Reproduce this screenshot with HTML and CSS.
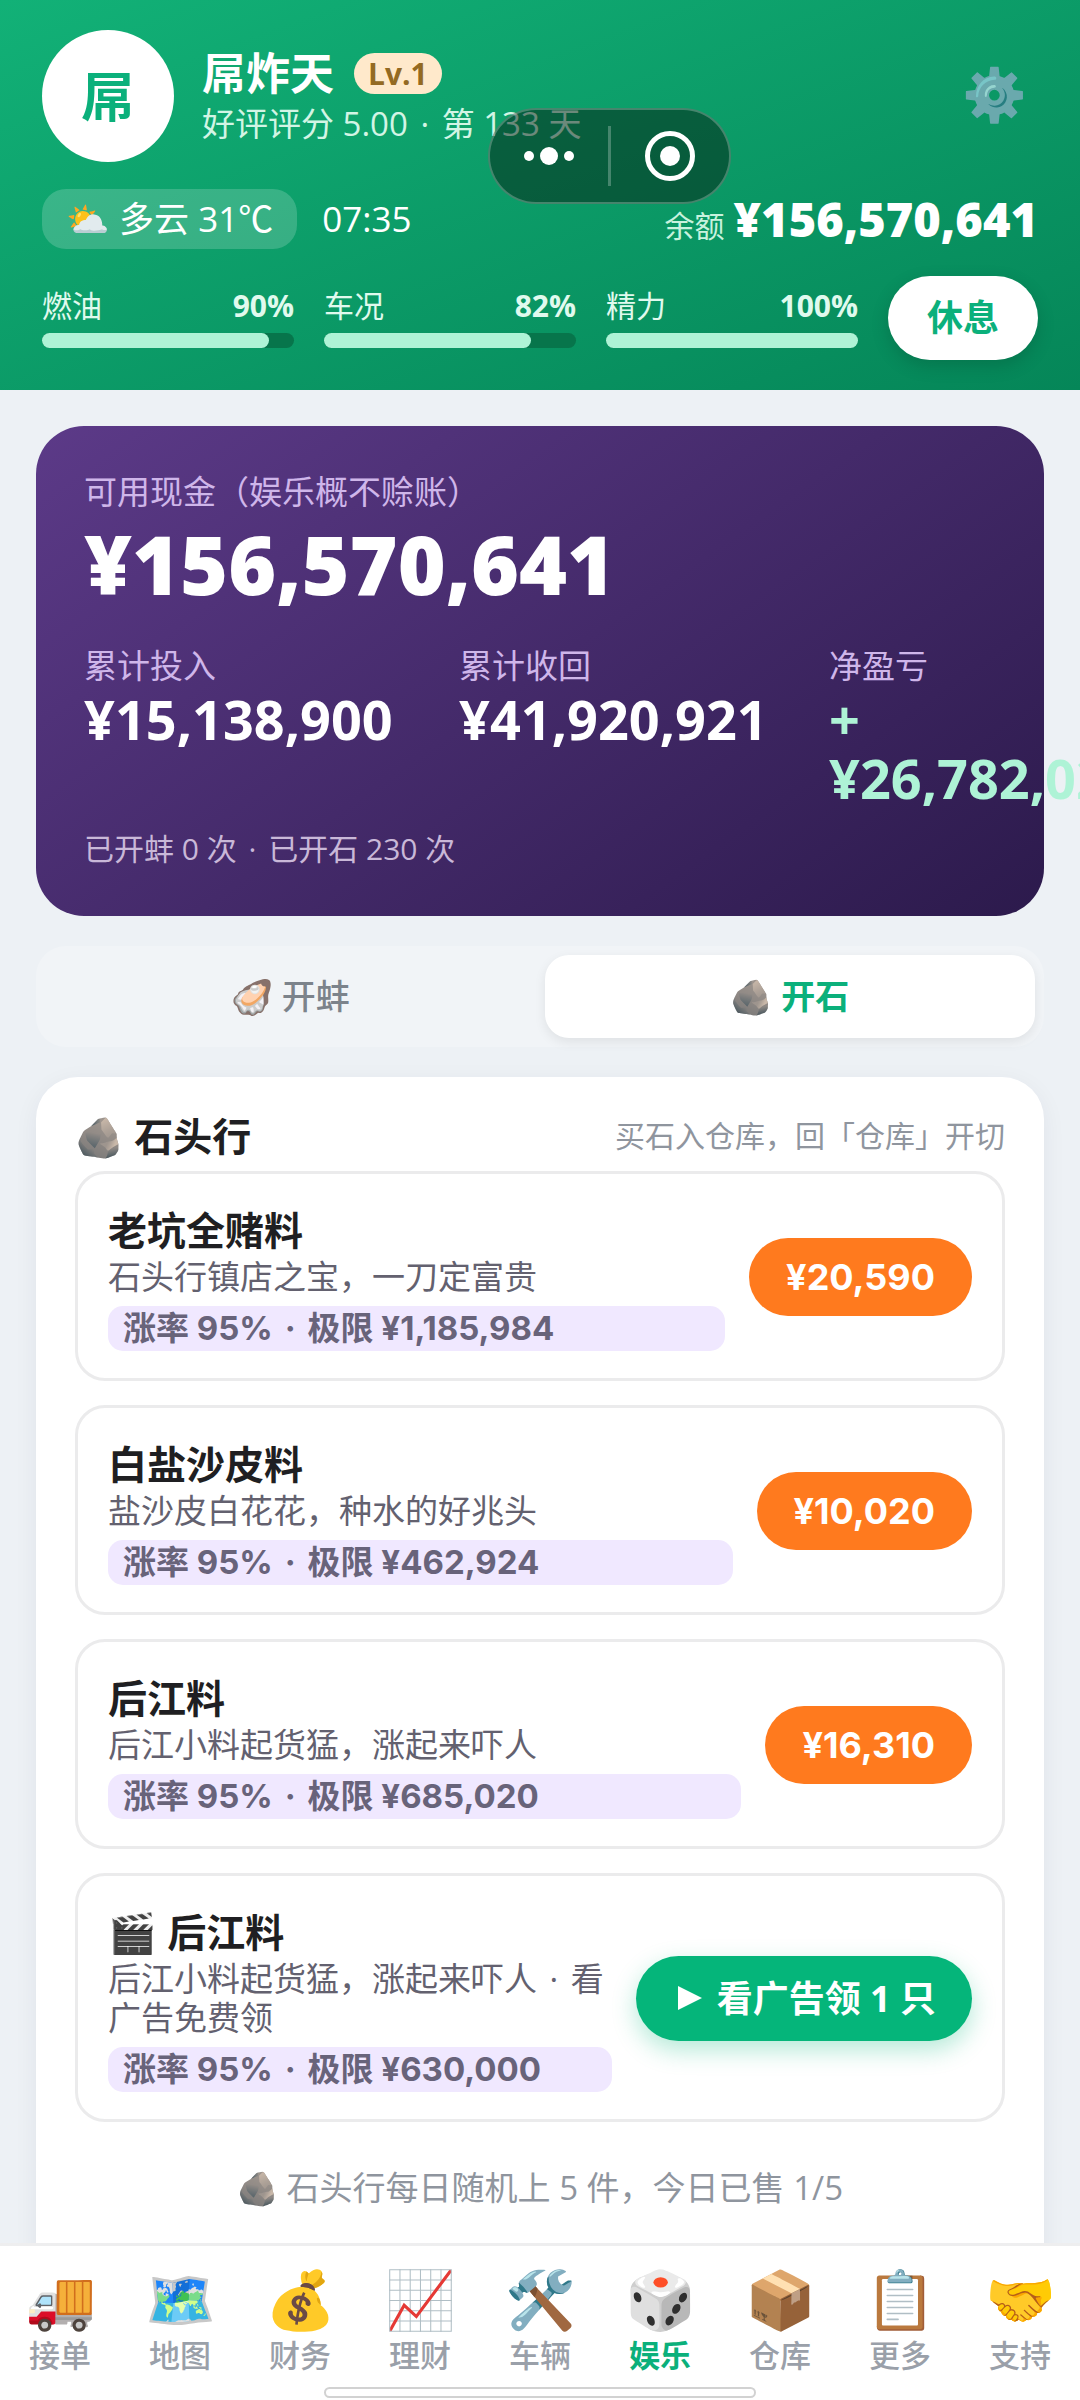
FILE: index.html
```html
<!DOCTYPE html>
<html lang="zh-CN">
<head>
<meta charset="utf-8">
<meta name="viewport" content="width=device-width, initial-scale=1">
<title>娱乐</title>
<link rel="stylesheet" href="styles.css">
</head>
<body>
<div class="app">
  <header class="top">
    <div class="profile">
      <div class="avatar">屌</div>
      <div class="who">
        <div class="name-row"><span class="name">屌炸天</span><span class="level">Lv.1</span></div>
        <div class="rating">好评评分 5.00 <span class="dot">·</span> 第 133 天</div>
      </div>
      <button class="gear" type="button" aria-label="设置"><span class="emoji">⚙️</span></button>
    </div>
    <div class="status">
      <span class="weather"><span class="emoji">⛅</span> 多云 31℃</span>
      <span class="clock">07:35</span>
      <span class="balance"><span class="balance-label">余额</span><strong>¥156,570,641</strong></span>
    </div>
    <div class="meters">
      <div class="meter"><div class="meter-head"><span>燃油</span><b>90%</b></div><div class="track"><div class="fill" style="width:90%"></div></div></div>
      <div class="meter"><div class="meter-head"><span>车况</span><b>82%</b></div><div class="track"><div class="fill" style="width:82%"></div></div></div>
      <div class="meter"><div class="meter-head"><span>精力</span><b>100%</b></div><div class="track"><div class="fill" style="width:100%"></div></div></div>
      <button class="rest" type="button">休息</button>
    </div>
    <div class="capsule">
      <button type="button" aria-label="更多操作"><svg width="52" height="20" viewBox="0 0 52 20"><g fill="#fff"><circle cx="6" cy="10" r="5"/><circle cx="26" cy="10" r="9"/><circle cx="46" cy="10" r="5"/></g></svg></button>
      <span class="capsule-line"></span>
      <button type="button" aria-label="关闭"><svg width="52" height="52" viewBox="0 0 52 52"><circle cx="26" cy="26" r="22.5" fill="none" stroke="#fff" stroke-width="5"/><circle cx="26" cy="26" r="10" fill="#fff"/></svg></button>
    </div>
  </header>

  <main class="content">
    <section class="cash">
      <div class="cash-label">可用现金（娱乐概不赊账）</div>
      <div class="cash-total">¥156,570,641</div>
      <div class="cash-cols">
        <div><div class="cash-label">累计投入</div><div class="cash-num">¥15,138,900</div></div>
        <div><div class="cash-label">累计收回</div><div class="cash-num">¥41,920,921</div></div>
        <div><div class="cash-label">净盈亏</div><div class="cash-num gain">+<wbr>¥26,782,021</div></div>
      </div>
      <div class="cash-foot">已开蚌 0 次 <span class="dot">·</span> 已开石 230 次</div>
    </section>

    <div class="tabs">
      <button class="tab" type="button"><span class="emoji">🦪</span> 开蚌</button>
      <button class="tab active" type="button"><span class="emoji">🪨</span> 开石</button>
    </div>

    <section class="shop">
      <div class="shop-head"><h2><span class="emoji">🪨</span> 石头行</h2><span>买石入仓库，回「仓库」开切</span></div>
      <div class="items">
        <article class="item">
          <div class="info"><h3>老坑全赌料</h3><p>石头行镇店之宝，一刀定富贵</p><div class="tag">涨率 95% <span class="dot">·</span> 极限 ¥1,185,984</div></div>
          <button class="price" type="button">¥20,590</button>
        </article>
        <article class="item">
          <div class="info"><h3>白盐沙皮料</h3><p>盐沙皮白花花，种水的好兆头</p><div class="tag">涨率 95% <span class="dot">·</span> 极限 ¥462,924</div></div>
          <button class="price" type="button">¥10,020</button>
        </article>
        <article class="item">
          <div class="info"><h3>后江料</h3><p>后江小料起货猛，涨起来吓人</p><div class="tag">涨率 95% <span class="dot">·</span> 极限 ¥685,020</div></div>
          <button class="price" type="button">¥16,310</button>
        </article>
        <article class="item">
          <div class="info"><h3><span class="emoji">🎬</span> 后江料</h3><p>后江小料起货猛，涨起来吓人 <span class="dot">·</span> 看广告免费领</p><div class="tag">涨率 95% <span class="dot">·</span> 极限 ¥630,000</div></div>
          <button class="ad" type="button"><svg width="24" height="24" viewBox="0 0 24 24"><path d="M0 0L24 12L0 24Z" fill="#fff"/></svg>看广告领 1 只</button>
        </article>
      </div>
      <p class="hint"><span class="emoji">🪨</span> 石头行每日随机上 5 件，今日已售 1/5</p>
    </section>
  </main>

  <nav class="nav">
    <a href="#"><span class="emoji">🚚</span>接单</a>
    <a href="#"><span class="emoji">🗺️</span>地图</a>
    <a href="#"><span class="emoji">💰</span>财务</a>
    <a href="#"><span class="emoji">📈</span>理财</a>
    <a href="#"><span class="emoji">🛠️</span>车辆</a>
    <a href="#" class="on"><span class="emoji">🎲</span>娱乐</a>
    <a href="#"><span class="emoji">📦</span>仓库</a>
    <a href="#"><span class="emoji">📋</span>更多</a>
    <a href="#"><span class="emoji">🤝</span>支持</a>
    <span class="home-bar"></span>
  </nav>
</div>
</body>
</html>
```
FILE: styles.css
```css
* { box-sizing: border-box; }
body {
  margin: 0;
  background: #edf1f5;
  color: #1f1f22;
  font-family: "Open Sans", "Noto Sans CJK SC", sans-serif;
  font-size: 33px;
}
button { border: 0; padding: 0; background: none; font: inherit; color: inherit; }
h2, h3, p { margin: 0; }
.app { height: 100vh; display: flex; flex-direction: column; overflow: hidden; }
.dot { margin: 0 4px; }

.top {
  position: relative;
  flex: none;
  display: flex;
  flex-direction: column;
  gap: 27px;
  padding: 30px 42px;
  background: linear-gradient(160deg, #12b177, #058658);
  color: #fff;
}
.profile { display: flex; align-items: center; gap: 28px; }
.avatar {
  width: 132px; height: 132px;
  border-radius: 50%;
  background: #fff;
  color: #0bb07b;
  font-size: 54px; font-weight: 700; line-height: 132px;
  text-align: center;
}
.who { flex: 1; padding-top: 2px; }
.name-row { display: flex; align-items: center; gap: 20px; }
.name { font-size: 44px; font-weight: 700; line-height: 54px; }
.level {
  padding: 0 14px;
  border-radius: 21px;
  background: #ffe9cb;
  color: #946a22;
  font-size: 30px; font-weight: 700; line-height: 41px;
}
.rating { color: #d2f5e5; line-height: 48px; }
.gear { width: 88px; padding-bottom: 6px; font-size: 52px; line-height: 56px; opacity: .8; }

.status { display: flex; align-items: center; gap: 25px; height: 60px; font-size: 35px; line-height: 60px; }
.weather { padding: 0 24px; border-radius: 24px; background: rgba(255, 255, 255, .18); }
.balance { display: flex; align-items: baseline; gap: 9px; margin-left: auto; padding-top: 6px; line-height: 48px; white-space: nowrap; }
.balance-label { color: #c8f2de; font-size: 30px; }
.balance strong { font-size: 47px; font-weight: 800; }

.meters { display: flex; align-items: center; gap: 30px; }
.meter { flex: 1; }
.meter-head { display: flex; justify-content: space-between; color: #e0faee; font-size: 30px; line-height: 36px; padding-bottom: 9px; }
.meter-head b { font-weight: 700; }
.track { height: 15px; border-radius: 8px; background: #07754b; }
.fill { height: 15px; border-radius: 8px; background: #aef3d6; }
.rest {
  padding: 0 39px;
  border-radius: 42px;
  background: #fff;
  color: #0bb07b;
  font-size: 36px; font-weight: 700; line-height: 84px;
  box-shadow: 0 6px 18px rgba(0, 0, 0, .15);
}
.capsule {
  position: absolute;
  top: 108px; left: 488px;
  display: grid;
  grid-template-columns: 1fr 3px 1fr;
  align-items: center;
  width: 243px; height: 96px;
  border: 2px solid rgba(255, 255, 255, .25);
  border-radius: 48px;
  background: rgba(4, 30, 18, .5);
}
.capsule button { display: flex; justify-content: center; }
.capsule-line { height: 60px; background: rgba(255, 255, 255, .25); }

.content { flex: 1; min-height: 0; padding: 36px 36px 0; overflow: hidden; }
.cash {
  padding: 42px 48px 46px;
  border-radius: 48px;
  background: linear-gradient(145deg, #5c3a88, #2c1a4c);
  color: #fff;
}
.cash-label { color: #cfb6ea; line-height: 48px; }
.cash-total { font-size: 82px; font-weight: 800; line-height: 94px; padding-bottom: 32px; }
.cash-cols { display: grid; grid-template-columns: minmax(0, 339fr) minmax(0, 334fr) minmax(0, 167fr); gap: 36px; }
.cash-num { font-size: 54px; font-weight: 700; line-height: 59px; }
.gain { color: #aef3d6; }
.cash-foot { color: #c9b8d8; font-size: 30px; line-height: 42px; padding-top: 20px; }

.tabs {
  display: grid;
  grid-template-columns: 1fr 1fr;
  gap: 9px;
  margin: 30px 0;
  padding: 9px;
  border-radius: 30px;
  background: #f1f4f7;
}
.tab { border-radius: 24px; color: #7c838b; font-size: 34px; font-weight: 500; line-height: 83px; }
.tab.active { background: #fff; color: #0bb07b; font-weight: 700; box-shadow: 0 4px 12px rgba(0, 0, 0, .08); }

.shop {
  padding: 30px 39px;
  border-radius: 42px 42px 0 0;
  background: #fff;
  box-shadow: 0 6px 24px rgba(0, 20, 60, .06);
}
.shop-head { display: flex; justify-content: space-between; align-items: center; line-height: 58px; padding-bottom: 6px; }
.shop-head h2 { font-size: 39px; font-weight: 700; }
.shop-head > span { color: #8f959e; font-size: 30px; }
.items { display: flex; flex-direction: column; gap: 24px; }
.item {
  display: flex;
  align-items: center;
  gap: 24px;
  padding: 28px 30px 27px;
  border: 3px solid #ebebec;
  border-radius: 30px;
}
.info { flex: 1; }
.info h3 { font-size: 39px; font-weight: 700; line-height: 55px; }
.info p { color: #63616f; line-height: 39px; }
.tag {
  margin-top: 10px;
  padding: 0 15px;
  border-radius: 15px;
  background: #f0e8ff;
  color: #68637a;
  font-family: Inter, "Noto Sans CJK SC", sans-serif;
  font-size: 33px; font-weight: 700; line-height: 45px;
}
.price, .ad { flex: none; border-radius: 43px; color: #fff; font-size: 36px; font-weight: 700; }
.price { padding: 0 37px; background: #ff7a1e; font-family: Inter, sans-serif; line-height: 78px; }
.ad {
  display: flex;
  align-items: center;
  gap: 15px;
  padding: 0 36px 0 42px;
  background: #05b57a;
  line-height: 85px;
  box-shadow: 0 9px 24px rgba(5, 181, 122, .3);
}
.hint { padding: 42px 0; color: #8f959e; line-height: 48px; text-align: center; }

.nav {
  position: relative;
  flex: none;
  display: grid;
  grid-template-columns: repeat(9, 1fr);
  padding: 17px 0 24px;
  border-top: 3px solid #eeeeef;
  background: #fff;
}
.nav a {
  display: flex;
  flex-direction: column;
  align-items: center;
  color: #9aa0a9;
  font-size: 31px; font-weight: 500; line-height: 42px;
  text-decoration: none;
}
.nav .on { color: #0bb07b; font-weight: 700; }
.nav .emoji { font-size: 57px; line-height: 71px; }
.home-bar {
  position: absolute;
  left: 30%; right: 30%; bottom: 2px;
  height: 11px;
  border: 2px solid #d2d2d2;
  border-radius: 6px;
  background: #fff;
}
```
